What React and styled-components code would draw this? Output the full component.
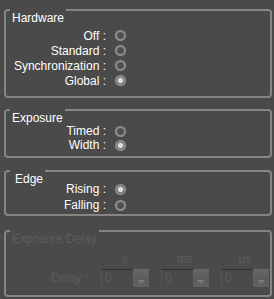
import React from "react";
import styled, { createGlobalStyle } from "styled-components";

const Global = createGlobalStyle`
  html, body { margin: 0; padding: 0; background: #4a4a4a; }
  body { font-family: "Liberation Sans", Arial, sans-serif; font-size: 12px; color: #ffffff; }
  * { box-sizing: border-box; }
`;

const Panel = styled.div`
  width: 274px;
  height: 299px;
  padding: 9px 2px 0 4px;
  display: flex;
  flex-direction: column;
  background: #4a4a4a;
`;

const Group = styled.section`
  position: relative;
  border: 2px solid #858585;
  border-radius: 4px;
  margin-top: ${(p) => p.$mt || 0}px;
  padding: ${(p) => p.$pt}px 0 ${(p) => p.$pb}px 0;
`;

const Title = styled.div`
  position: absolute;
  top: -2px;
  left: ${(p) => p.$left || 4}px;
  padding: 2px ${(p) => p.$padR || 2}px 0 ${(p) => p.$padL || 2}px;
  line-height: 14px;
  background: #4a4a4a;
  color: ${(p) => (p.$disabled ? "#5d5d5d" : "#ffffff")};
  white-space: nowrap;
`;

const Row = styled.div`
  display: flex;
  align-items: center;
  height: ${(p) => p.$h}px;
`;

const Label = styled.span`
  width: 100px;
  text-align: right;
  white-space: nowrap;
  line-height: 14px;
`;

const Radio = styled.span`
  display: inline-block;
  width: 11px;
  height: 11px;
  margin-left: 9px;
  border-radius: 50%;
  border: 2px solid #8c8c8c;
  background: ${(p) =>
    p.$checked
      ? "radial-gradient(circle, #dcdcdc 0 2.2px, #9a9a9a 2.8px, #5a5a5a 3.6px)"
      : "radial-gradient(circle, #4f4f4f 0 2.5px, #5c5c5c 3.5px)"};
  box-shadow: 0 0 0 0.5px #5a5a5a;
`;

const DelayGrid = styled.div`
  display: grid;
  grid-template-columns: 83px 48px 48px 48px;
  column-gap: 12px;
  align-items: center;
`;

const Header = styled.span`
  text-align: center;
  color: #5d5d5d;
  line-height: 14px;
  height: 14px;
  margin-bottom: 3px;
`;

const DelayLabel = styled.span`
  text-align: right;
  color: #5d5d5d;
  line-height: 14px;
  padding-right: 1px;
`;

const Spin = styled.div`
  display: flex;
  height: 18px;
`;

const Field = styled.div`
  flex: 1;
  border-top: 1px solid #2c2c2c;
  border-left: 1px solid #555555;
  color: #5d5d5d;
  padding-left: 3px;
  line-height: 16px;
`;

const SpinButton = styled.div`
  width: 16px;
  display: flex;
  flex-direction: column;
  align-items: center;
  justify-content: flex-end;
  padding-bottom: 3px;
  background: linear-gradient(#676767, #5c5c5c 55%, #626262);
  border-radius: 1px;
`;

const Arrow = styled.span`
  width: 0;
  height: 0;
  border-left: 4px solid transparent;
  border-right: 4px solid transparent;
  border-top: 4px solid #7a7a7a;
`;

function RadioRow({ label, checked, h }) {
  return (
    <Row $h={h}>
      <Label>{label} :</Label>
      <Radio $checked={checked} />
    </Row>
  );
}

function SpinBox() {
  return (
    <Spin>
      <Field>0</Field>
      <SpinButton>
        <Arrow />
      </SpinButton>
    </Spin>
  );
}

export default function App() {
  return (
    <>
      <Global />
      <Panel>
        <Group $pt={17} $pb={8}>
          <Title>Hardware</Title>
          <RadioRow label="Off" h={15} />
          <RadioRow label="Standard" h={15} />
          <RadioRow label="Synchronization" h={15} />
          <RadioRow label="Global" h={15} checked />
        </Group>
        <Group $mt={11} $pt={13} $pb={4}>
          <Title>Exposure</Title>
          <RadioRow label="Timed" h={14} />
          <RadioRow label="Width" h={14} checked />
        </Group>
        <Group $mt={12} $pt={9} $pb={1}>
          <Title $padL={5}>Edge</Title>
          <RadioRow label="Rising" h={16} checked />
          <RadioRow label="Falling" h={16} />
        </Group>
        <Group $mt={14} $pt={20} $pb={8}>
          <Title $disabled>Exposure Delay</Title>
          <DelayGrid>
            <span />
            <Header>s</Header>
            <Header>ms</Header>
            <Header>µs</Header>
            <DelayLabel>Delay :</DelayLabel>
            <SpinBox />
            <SpinBox />
            <SpinBox />
          </DelayGrid>
        </Group>
      </Panel>
    </>
  );
}
